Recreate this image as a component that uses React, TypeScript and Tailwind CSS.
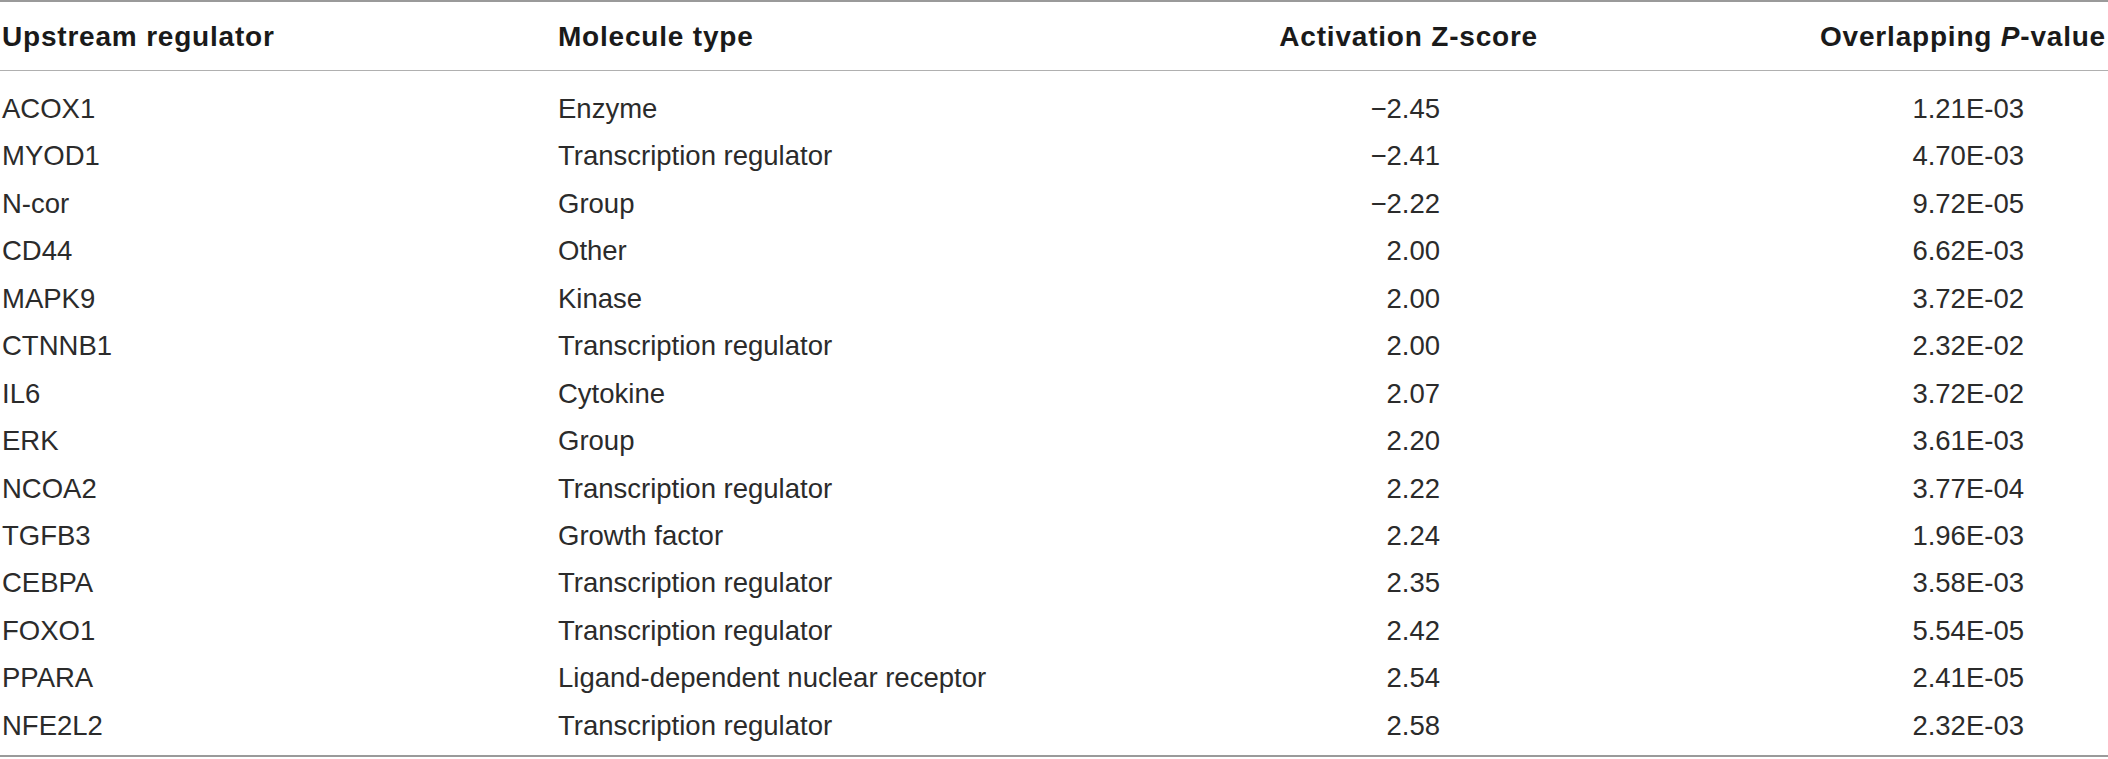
const rows: [string, string, string, string][] = [
  ['ACOX1', 'Enzyme', '\u22122.45', '1.21E-03'],
  ['MYOD1', 'Transcription regulator', '\u22122.41', '4.70E-03'],
  ['N-cor', 'Group', '\u22122.22', '9.72E-05'],
  ['CD44', 'Other', '2.00', '6.62E-03'],
  ['MAPK9', 'Kinase', '2.00', '3.72E-02'],
  ['CTNNB1', 'Transcription regulator', '2.00', '2.32E-02'],
  ['IL6', 'Cytokine', '2.07', '3.72E-02'],
  ['ERK', 'Group', '2.20', '3.61E-03'],
  ['NCOA2', 'Transcription regulator', '2.22', '3.77E-04'],
  ['TGFB3', 'Growth factor', '2.24', '1.96E-03'],
  ['CEBPA', 'Transcription regulator', '2.35', '3.58E-03'],
  ['FOXO1', 'Transcription regulator', '2.42', '5.54E-05'],
  ['PPARA', 'Ligand-dependent nuclear receptor', '2.54', '2.41E-05'],
  ['NFE2L2', 'Transcription regulator', '2.58', '2.32E-03'],
]

export default function App() {
  return (
    <div className="w-[2108px] h-[759px] bg-white font-['Liberation_Sans',Arial,sans-serif] text-[#2b2b2b]">
      <div className="border-t-2 border-b-2 border-[#9a9a9a]">
        {/* header */}
        <div className="flex h-[69px] leading-[69px] text-[28px] font-bold tracking-[0.8px] text-[#1a1a1a] border-b border-[#b0b0b0] whitespace-nowrap">
          <div className="w-[558px] pl-[2px]">Upstream regulator</div>
          <div className="w-[700px]">Molecule type</div>
          <div className="w-[280px] text-right">Activation Z-score</div>
          <div className="w-[568px] text-right">
            Overlapping <i>P</i>-value
          </div>
        </div>

        {/* body */}
        <div className="pt-[14px] pb-[6px] text-[27.5px] whitespace-nowrap">
          {rows.map(([reg, type, z, p]) => (
            <div key={reg} className="flex h-[47.45px] leading-[47.45px]">
              <div className="w-[558px] pl-[2px]">{reg}</div>
              <div className="w-[700px]">{type}</div>
              <div className="w-[282px] text-right pr-[100px]">{z}</div>
              <div className="w-[566px] text-right pr-[82px]">{p}</div>
            </div>
          ))}
        </div>
      </div>
    </div>
  )
}
